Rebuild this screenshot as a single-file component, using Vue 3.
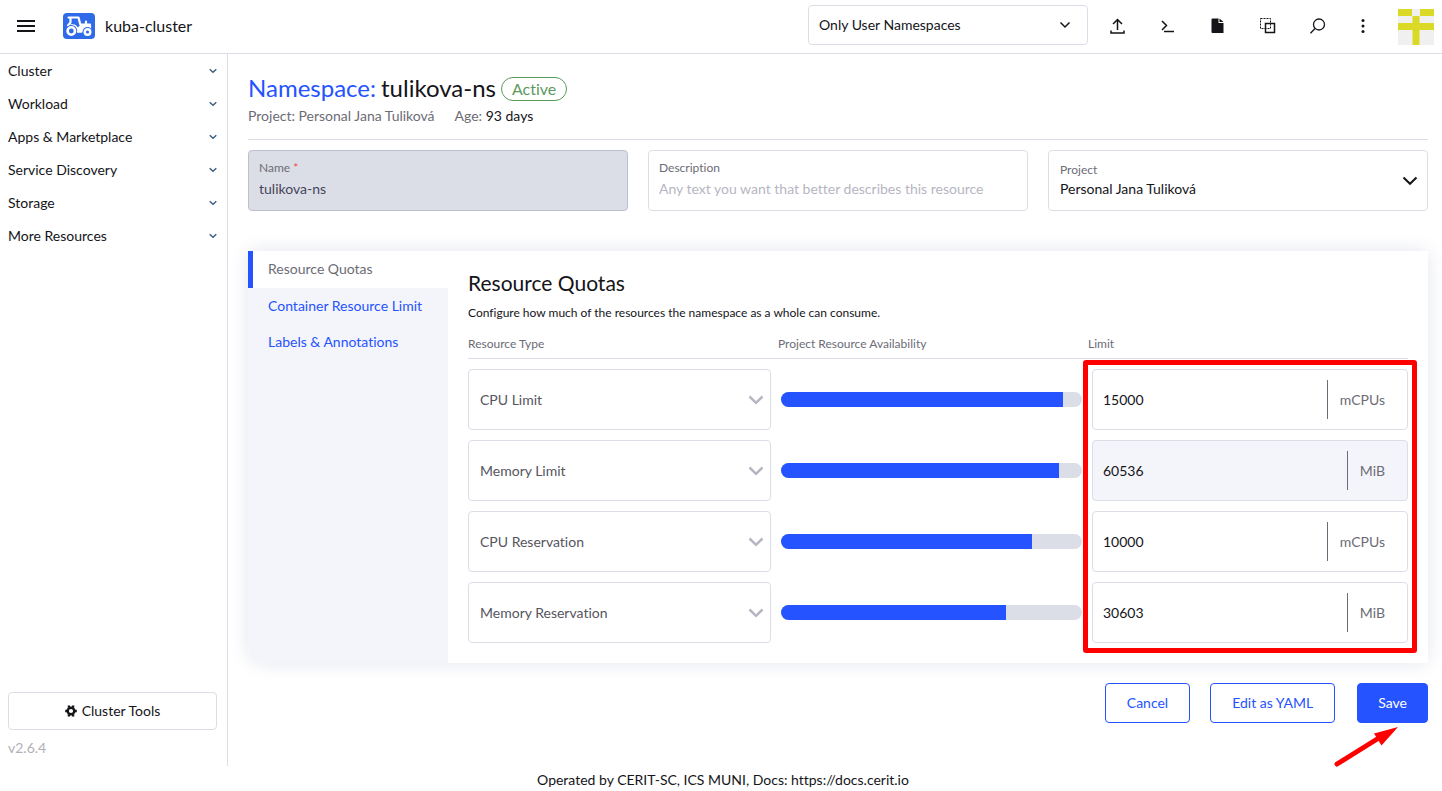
<script setup>
import { ref } from 'vue'

const navGroups = ['Cluster', 'Workload', 'Apps & Marketplace', 'Service Discovery', 'Storage', 'More Resources']
const tabs = ['Resource Quotas', 'Container Resource Limit', 'Labels & Annotations']
const activeTab = ref('Resource Quotas')
const name = ref('tulikova-ns')
const description = ref('')

const quotas = ref([
  { type: 'CPU Limit', used: 93.7, limit: '15000', unit: 'mCPUs', active: false },
  { type: 'Memory Limit', used: 92.4, limit: '60536', unit: 'MiB', active: true },
  { type: 'CPU Reservation', used: 83.4, limit: '10000', unit: 'mCPUs', active: false },
  { type: 'Memory Reservation', used: 74.8, limit: '30603', unit: 'MiB', active: false },
])
</script>

<template>
  <div class="app">
    <header class="topbar">
      <button class="icon-btn menu" aria-label="Menu">
        <svg width="18" height="12" viewBox="0 0 18 12"><path d="M0 0h18v2H0zM0 5h18v2H0zM0 10h18v2H0z" fill="#141419" /></svg>
      </button>
      <svg class="brand" width="32" height="26" viewBox="0 0 32 26" aria-hidden="true">
        <rect width="32" height="26" rx="4" fill="#2f6be8" />
        <path d="M5.500 4.500h10l1.800 7H27v5.500M7.500 5v4.500L5 12.500M23 11V8.500" fill="none" stroke="#fff" stroke-width="2.200" stroke-linecap="round" stroke-linejoin="round" />
        <path d="M7 11.500c4-1 6 0 8 3l3-3.500h8.500l1.500 4c-5-1-7.500 1-8.500 4.500h-6z" fill="#fff" />
        <circle cx="8.300" cy="18" r="6" fill="#2f6be8" />
        <circle cx="8.300" cy="18" r="3.700" fill="none" stroke="#fff" stroke-width="2.600" />
        <circle cx="24.500" cy="19" r="5" fill="#2f6be8" />
        <circle cx="24.500" cy="19" r="2.800" fill="none" stroke="#fff" stroke-width="2.400" />
        <path d="M14 17.500h5v2h-5z" fill="#fff" />
      </svg>
      <span class="cluster-name">kuba-cluster</span>

      <div class="select-wrap ns-filter">
        <select aria-label="Namespace filter"><option>Only User Namespaces</option></select>
        <svg class="chev" width="12" height="8" viewBox="0 0 12 8"><path d="M1.500 1.500L6 6l4.500-4.500" fill="none" stroke="#141419" stroke-width="1.500" /></svg>
      </div>

      <div class="tools">
        <button class="icon-btn" aria-label="Import YAML">
          <svg width="16" height="16" viewBox="0 0 16 16"><path d="M7.500 12V1.500M3 6l4.500-4.500L12 6M1 12.500V15h13v-2.500" fill="none" stroke="#141419" stroke-width="1.500" /></svg>
        </button>
        <button class="icon-btn" aria-label="Kubectl shell">
          <svg width="16" height="16" viewBox="0 0 16 16"><path d="M2 3l4.500 4.500L2 12M4 13.500h10" fill="none" stroke="#141419" stroke-width="1.500" /></svg>
        </button>
        <button class="icon-btn" aria-label="Download KubeConfig">
          <svg width="16" height="16" viewBox="0 0 16 16"><path d="M2.500 .500H8.500V5H13.500v10H2.500a1 1 0 0 1-1-1V1.500a1 1 0 0 1 1-1zM9.500.500L13.500 4h-4z" fill="#141419" /></svg>
        </button>
        <button class="icon-btn" aria-label="Copy KubeConfig">
          <svg width="16" height="16" viewBox="0 0 16 16" fill="none" stroke="#141419"><path d="M5.500 5.500h9v9h-9z" stroke-width="1.500" /><path d="M.500.500h10v10H.500z" stroke-dasharray="2 1" /></svg>
        </button>
        <button class="icon-btn" aria-label="Resource search">
          <svg width="16" height="16" viewBox="0 0 16 16" fill="none" stroke="#141419" stroke-width="1.300"><circle cx="9" cy="6.500" r="5.500" /><path d="M5 10.500L.500 15.300" /></svg>
        </button>
        <button class="icon-btn kebab" aria-label="More actions">
          <svg width="4" height="16" viewBox="0 0 4 16" fill="#141419"><circle cx="2" cy="2.500" r="1.500" /><circle cx="2" cy="8" r="1.500" /><circle cx="2" cy="13.500" r="1.500" /></svg>
        </button>
      </div>
      <svg class="avatar" width="36" height="36" viewBox="0 0 36 36" role="img" aria-label="User">
        <rect width="36" height="36" fill="#f0f0f0" />
        <path d="M0 0h14v7H0zM22 0h14v7H22zM0 14h14.500V7h7v7H36v7H21.500v15h-7V21H0z" fill="#d9d926" />
      </svg>
    </header>

    <div class="body">
      <nav class="sidebar">
        <button v-for="g in navGroups" :key="g" class="nav-item">
          <span>{{ g }}</span>
          <svg width="8" height="6" viewBox="0 0 8 6"><path d="M.700 1.300L4 4.300l3.300-3" fill="none" stroke="#3f6080" stroke-width="1.500" /></svg>
        </button>
        <div class="nav-foot">
          <button class="cluster-tools">
            <svg width="12" height="12" viewBox="0 0 12 12"><circle cx="6" cy="6" r="3.300" fill="none" stroke="#141419" stroke-width="2.400" /><path d="M3.900 .500v2M8.100 .500v2M3.900 9.500v2M8.100 9.500v2M.200 6h2M9.800 6h2" stroke="#141419" stroke-width="2.400" /></svg>
            Cluster Tools
          </button>
          <span class="version">v2.6.4</span>
        </div>
      </nav>

      <main class="main">
        <div class="masthead">
          <h1><a href="#">Namespace:</a> {{ name }} <span class="badge">Active</span></h1>
          <p class="meta"><span>Project: Personal Jana Tuliková</span><span>Age: <b>93 days</b></span></p>
        </div>

        <div class="fields">
          <div class="field disabled">
            <label for="f-name">Name <i>*</i></label>
            <input id="f-name" v-model="name" type="text" disabled />
          </div>
          <div class="field">
            <label for="f-desc">Description</label>
            <input id="f-desc" v-model="description" type="text" placeholder="Any text you want that better describes this resource" />
          </div>
          <div class="field project">
            <label for="f-project">Project</label>
            <select id="f-project"><option>Personal Jana Tuliková</option></select>
            <svg class="chev" width="16" height="10" viewBox="0 0 16 10"><path d="M1.500 1.500L8 7.800l6.500-6.300" fill="none" stroke="#141419" stroke-width="2" /></svg>
          </div>
        </div>

        <section class="panel">
          <div class="tabs" role="tablist">
            <button v-for="t in tabs" :key="t" class="tab" role="tab" :class="{ active: t === activeTab }" :aria-selected="t === activeTab" @click="activeTab = t">{{ t }}</button>
          </div>
          <div class="content">
            <h2>Resource Quotas</h2>
            <p class="hint">Configure how much of the resources the namespace as a whole can consume.</p>
            <div class="heads">
              <span>Resource Type</span><span>Project Resource Availability</span><span>Limit</span>
            </div>
            <div class="rows">
              <template v-for="q in quotas" :key="q.type">
                <div class="select-wrap type">
                  <select :aria-label="'Resource type: ' + q.type"><option>{{ q.type }}</option></select>
                  <svg class="chev" width="16" height="10" viewBox="0 0 16 10"><path d="M1.500 1.500L8 7.800l6.500-6.300" fill="none" stroke="#b6b6c2" stroke-width="2.500" /></svg>
                </div>
                <div class="bar" role="progressbar" :aria-label="q.type" :aria-valuenow="q.used"><div class="fill" :style="{ width: q.used + '%' }"></div></div>
                <div class="limit" :class="{ active: q.active }">
                  <input v-model="q.limit" type="text" :aria-label="q.type + ' in ' + q.unit" />
                  <span class="unit">{{ q.unit }}</span>
                </div>
              </template>
              <div class="highlight"></div>
            </div>
          </div>
        </section>

        <div class="actions">
          <button class="btn">Cancel</button>
          <button class="btn">Edit as YAML</button>
          <div class="save">
            <button class="btn primary">Save</button>
            <svg class="arrow" width="68" height="44" viewBox="0 0 68 44"><path d="M5 41L46 15.500" stroke="#f00" stroke-width="5" stroke-linecap="round" /><path d="M66 4L42 10.500l7.500 12z" fill="#f00" /></svg>
          </div>
        </div>
      </main>
    </div>

    <footer class="footer">Operated by CERIT-SC, ICS MUNI, Docs: https://docs.cerit.io</footer>
  </div>
</template>

<style>
body { margin: 0; background: #fff; }
</style>

<style scoped>
.app {
  display: flex; flex-direction: column; min-height: 100vh;
  font-family: Lato, "Liberation Sans", sans-serif; font-size: 14px; line-height: 20px; color: #141419;
  font-variant-ligatures: none;
}
.app *, .app { box-sizing: border-box; }
button, input, select { font: inherit; font-variant-ligatures: none; color: inherit; margin: 0; padding: 0; border: 0; background: none; outline: none; }
button { cursor: pointer; }
select { appearance: none; width: 100%; height: 100%; }
svg { display: block; flex: none; }

.topbar { display: flex; align-items: center; height: 54px; padding: 0 8px 1px 0; border-bottom: 1px solid #dcdee7; }
.icon-btn { display: flex; align-items: center; justify-content: center; width: 40px; height: 40px; }
.menu { width: 52px; }
.brand { margin: 0 10px 0 11px; }
.cluster-name { font-size: 16px; }
.select-wrap { position: relative; border: 1px solid #dcdee7; border-radius: 4px; }
.chev { position: absolute; pointer-events: none; }
.ns-filter { width: 280px; height: 40px; margin: 0 10px 2px auto; }
.ns-filter select { padding-left: 10px; }
.ns-filter .chev { right: 16px; top: 15px; }
.tools { display: flex; gap: 10px; }
.kebab { width: 30px; }
.avatar { margin: 2px 0 0 20px; }

.body { display: flex; flex: 1; }
.sidebar { display: flex; flex-direction: column; width: 228px; flex: none; border-right: 1px solid #dcdee7; }
.nav-item { display: flex; align-items: center; justify-content: space-between; height: 33px; padding: 0 10px 0 8px; text-align: left; }
.nav-foot { display: flex; flex-direction: column; gap: 8px; margin-top: auto; padding: 0 10px 8px 8px; }
.cluster-tools { display: flex; align-items: center; justify-content: center; gap: 5px; height: 38px; border: 1px solid #dcdee7; border-radius: 4px; }
.version { color: #b0b0b8; }

.main { flex: 1; min-width: 0; padding: 20px 14px 0 20px; }
.masthead { padding-bottom: 13px; border-bottom: 1px solid #dcdee7; }
h1 { display: flex; align-items: center; gap: 5px; margin: 0; font-size: 24px; line-height: 28px; font-weight: 400; }
h1 a { color: #2453ff; text-decoration: none; }
.badge { height: 24px; margin-top: 2px; padding: 0 10px; border: 1px solid #5d995d; border-radius: 12px; color: #5d995d; font-size: 16px; line-height: 22px; }
.meta { display: flex; gap: 20px; margin: 4px 0 0; color: #6c6c76; }
.meta b { font-weight: 400; color: #141419; }

.fields { display: grid; grid-template-columns: repeat(3, 1fr); gap: 20px; margin-top: 10px; }
.field { position: relative; display: flex; flex-direction: column; height: 61px; padding: 9px 10px 0; border: 1px solid #dcdee7; border-radius: 4px; }
.field label { font-size: 12px; line-height: 16px; color: #6c6c76; }
.field label i { font-style: normal; color: #f64747; }
.field input { width: 100%; height: 20px; margin-top: 3px; }
.field input::placeholder { color: #b6b6c2; opacity: 1; }
.disabled { background: #dcdee7; border-color: #bdbfd0; }
.disabled input { color: #45455a; }
.project { padding: 11px 11px 0; }
.project select { height: 20px; margin-top: 1px; }
.project .chev { right: 9px; top: 25px; }

.panel { display: flex; margin-top: 40px; background: #fff; border-radius: 0 0 0 16px; box-shadow: 0 0 20px #e4e6ee; }
.tabs { display: flex; flex-direction: column; width: 200px; flex: none; background: #f4f5fa; border-radius: 0 0 0 16px; }
.tab { height: 36px; padding-left: 20px; text-align: left; color: #2453ff; }
.tab.active { height: 37px; padding: 0 0 1px 15px; border-left: 5px solid #2453ff; background: #fff; color: #6c6c76; }
.content { flex: 1; min-width: 0; padding: 20px; }
h2 { margin: 0; font-size: 21px; line-height: 24px; font-weight: 400; }
.hint { margin: 10px 0 0; font-size: 12px; line-height: 16px; }
.heads { display: grid; grid-template-columns: 31fr 31fr 32fr; margin-top: 15px; padding-bottom: 6px; border-bottom: 1px solid #dcdee7; font-size: 12px; line-height: 16px; color: #6c6c76; }
.rows { position: relative; display: grid; grid-template-columns: 303fr 301fr 316fr; grid-auto-rows: 61px; gap: 10px; align-items: center; margin-top: 10px; }
.type { height: 61px; color: #55555e; }
.type select { padding-left: 11px; }
.type .chev { right: 6px; top: 25px; }
.bar { height: 15px; border-radius: 8px; background: #dcdee7; overflow: hidden; }
.fill { height: 100%; background: #2453ff; }
.limit { display: flex; align-items: center; height: 61px; padding: 0 22px 0 10px; border: 1px solid #dcdee7; border-radius: 4px; }
.limit.active { background: #f4f5fa; }
.limit input { flex: 1; min-width: 0; height: 40px; }
.unit { padding-left: 12px; border-left: 1px solid #6c6c76; line-height: 39px; color: #6c6c76; }
.highlight { position: absolute; grid-column: 3 / 4; inset: -9px -9px -10px; border: 5px solid #f00; border-radius: 3px; pointer-events: none; }

.actions { display: flex; justify-content: flex-end; gap: 20px; margin-top: 20px; }
.btn { height: 40px; padding: 0 21px; border: 1px solid #2453ff; border-radius: 4px; color: #2453ff; }
.primary { padding: 0 20px; background: #2453ff; color: #fff; }
.save { position: relative; margin-left: 2px; }
.arrow { position: absolute; left: -25px; top: 40px; pointer-events: none; }

.footer { height: 25px; padding-left: 4px; line-height: 28px; text-align: center; }
</style>
